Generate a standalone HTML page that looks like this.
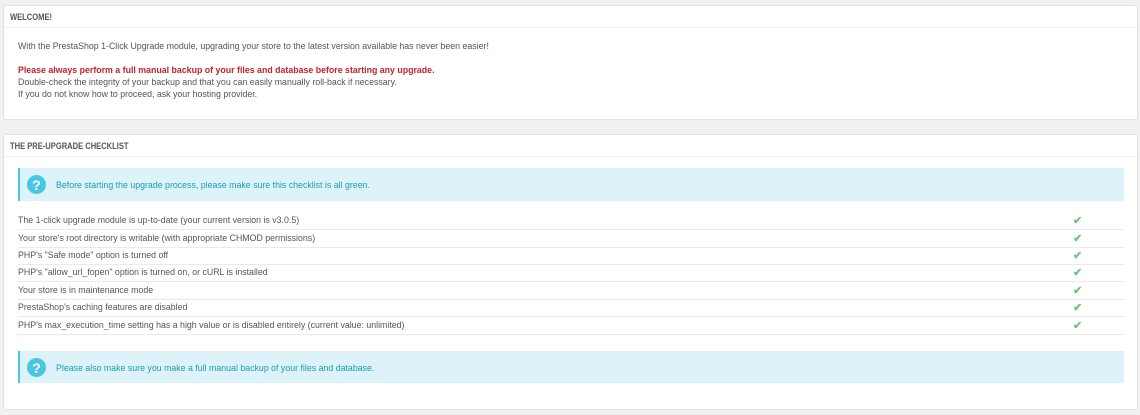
<!DOCTYPE html><html><head><style>
body{margin:0;background:#eff1f3;font-family:"Liberation Sans",sans-serif;font-size:8.8px;color:#555;width:1140px;height:415px;overflow:hidden;position:relative}
.p{position:absolute;left:3px;width:1133px;background:#fff;border:1px solid #e1e3e5;border-radius:3px}
.h{height:21px;border-bottom:1px solid #eee;padding-left:6px;line-height:23px}
.h span{display:inline-block;font-size:8.8px;font-weight:bold;color:#555;transform:scaleX(.86);transform-origin:left}
.t{position:absolute;left:14px;white-space:nowrap}
.info{position:absolute;left:14px;width:1104px;background:#dcf4f9;border-left:2px solid #4ac7e0;color:#1e9bb4}
.q{position:absolute;left:7px;width:19px;height:19px;border-radius:50%;background:#4ac7e0;color:#fff;font-weight:bold;font-size:14px;text-align:center;line-height:20px}
.row{position:absolute;left:14px;width:1106px;height:17px;border-bottom:1px solid #eaeaea;line-height:17px}
.ck{position:absolute;left:1055px;top:1px;color:#72c279;font-size:11px;font-weight:bold}
</style></head><body>
<div class="p" style="top:5px;height:113px">
<div class="h"><span>WELCOME!</span></div>
<div class="t" style="top:35px">With the PrestaShop 1-Click Upgrade module, upgrading your store to the latest version available has never been easier!</div>
<div class="t" style="top:59px;color:#c0222e;font-weight:bold">Please always perform a full manual backup of your files and database before starting any upgrade.</div>
<div class="t" style="top:71px">Double-check the integrity of your backup and that you can easily manually roll-back if necessary.</div>
<div class="t" style="top:83px">If you do not know how to proceed, ask your hosting provider.</div>
</div>
<div class="p" style="top:134px;height:274px">
<div class="h"><span>THE PRE-UPGRADE CHECKLIST</span></div>
<div class="info" style="top:33px;height:33px"><div class="q" style="top:7px">?</div><div style="position:absolute;left:36px;top:12px">Before starting the upgrade process, please make sure this checklist is all green.</div></div>
<div class="row" style="top:77px">The 1-click upgrade module is up-to-date (your current version is v3.0.5)<span class="ck">✔</span></div>
<div class="row" style="top:95px">Your store's root directory is writable (with appropriate CHMOD permissions)<span class="ck">✔</span></div>
<div class="row" style="top:112px">PHP's "Safe mode" option is turned off<span class="ck">✔</span></div>
<div class="row" style="top:129px">PHP's "allow_url_fopen" option is turned on, or cURL is installed<span class="ck">✔</span></div>
<div class="row" style="top:147px">Your store is in maintenance mode<span class="ck">✔</span></div>
<div class="row" style="top:164px">PrestaShop's caching features are disabled<span class="ck">✔</span></div>
<div class="row" style="top:182px">PHP's max_execution_time setting has a high value or is disabled entirely (current value: unlimited)<span class="ck">✔</span></div>
<div class="info" style="top:216px;height:32px"><div class="q" style="top:7px">?</div><div style="position:absolute;left:36px;top:12px">Please also make sure you make a full manual backup of your files and database.</div></div>
</div>
</body></html>
